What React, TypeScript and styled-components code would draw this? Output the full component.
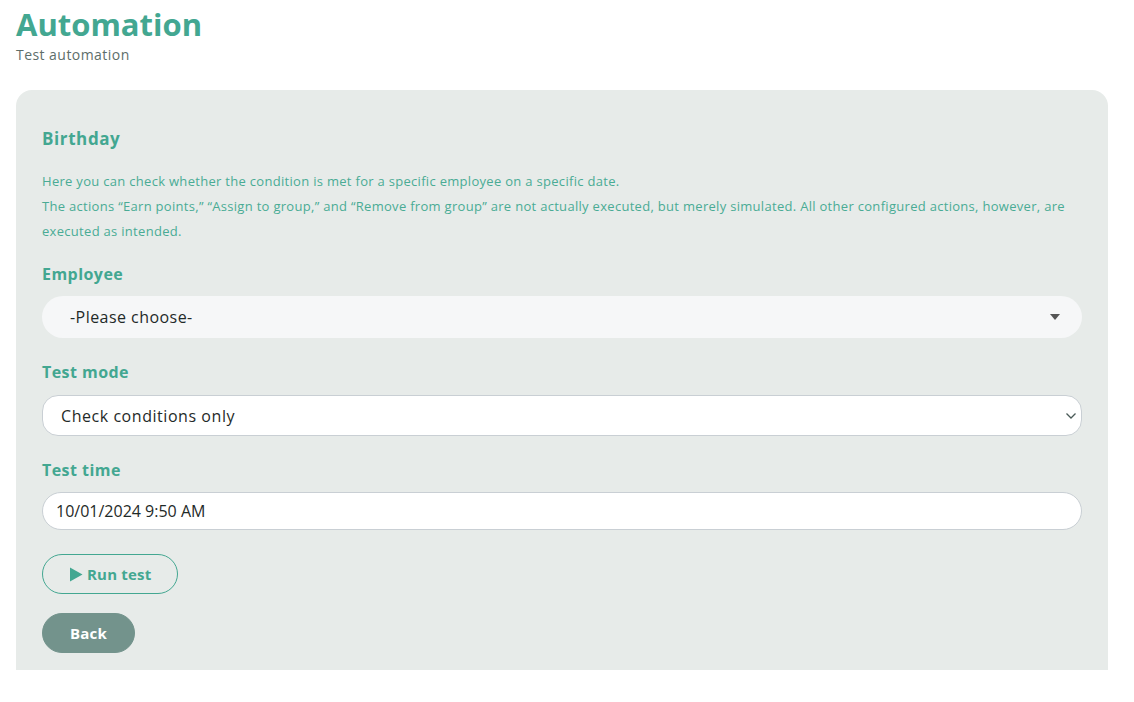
import React from 'react';
import styled, { createGlobalStyle } from 'styled-components';

const teal = '#43a791';
const tealText = '#4aab95';
const cardBg = '#e7ebe9';
const grayText = '#5d6e6a';
const darkText = '#1f2a28';

const GlobalStyle = createGlobalStyle`
  html, body {
    margin: 0;
    padding: 0;
    background: #ffffff;
    font-family: "Open Sans", "Noto Sans", Arial, sans-serif;
  }
  * { box-sizing: border-box; }
`;

const Page = styled.div`
  padding: 4px 26px 0 16px;
`;

const Title = styled.h1`
  margin: 0;
  color: ${teal};
  font-size: 31px;
  font-weight: 700;
  line-height: 40px;
`;

const Subtitle = styled.p`
  margin: 1px 0 0 0;
  color: ${grayText};
  font-size: 14px;
  letter-spacing: 0.45px;
  line-height: 20px;
`;

const Card = styled.div`
  margin-top: 25px;
  background: ${cardBg};
  border-radius: 16px 16px 0 0;
  padding: 36px 26px 17px 26px;
  display: flex;
  flex-direction: column;
`;

const Heading = styled.h2`
  margin: 0 0 17px 0;
  color: ${teal};
  font-size: 17px;
  font-weight: 700;
  letter-spacing: 0.6px;
  line-height: 26px;
`;

const Info = styled.p`
  margin: 0;
  color: ${tealText};
  font-size: 13px;
  letter-spacing: 0.3px;
  line-height: 25px;
`;

const Field = styled.div<{ $top: number; $gap: number }>`
  display: flex;
  flex-direction: column;
  gap: ${({ $gap }) => $gap}px;
  margin-top: ${({ $top }) => $top}px;
`;

const Label = styled.label`
  color: ${teal};
  font-size: 16px;
  font-weight: 700;
  letter-spacing: 0.45px;
  line-height: 22px;
`;

const SelectBox = styled.div<{ $variant: 'soft' | 'plain' }>`
  position: relative;
  display: flex;
  align-items: center;
  height: ${({ $variant }) => ($variant === 'soft' ? 42 : 41)}px;
  padding-left: ${({ $variant }) => ($variant === 'soft' ? 28 : 18)}px;
  border-radius: ${({ $variant }) => ($variant === 'soft' ? 21 : 16)}px;
  background: ${({ $variant }) => ($variant === 'soft' ? '#f6f7f8' : '#ffffff')};
  border: ${({ $variant }) => ($variant === 'soft' ? 'none' : '1px solid #c9cfd4')};
  color: ${darkText};
  font-size: 16px;
  letter-spacing: ${({ $variant }) => ($variant === 'soft' ? 0.45 : 0.55)}px;
`;

const Caret = styled.span<{ $right: number }>`
  position: absolute;
  right: ${({ $right }) => $right}px;
  top: 50%;
  transform: translateY(-50%);
  display: flex;
`;

const TextInput = styled.div`
  display: flex;
  align-items: center;
  height: 38px;
  padding-left: 13px;
  border-radius: 19px;
  background: #ffffff;
  border: 1px solid #c9cfd4;
  color: ${darkText};
  font-size: 16px;
`;

const Actions = styled.div`
  margin-top: 24px;
  display: flex;
  flex-direction: column;
  align-items: flex-start;
  gap: 19px;
`;

const Button = styled.button<{ $primary?: boolean }>`
  height: 40px;
  padding: 0 ${({ $primary }) => ($primary ? 26 : 27)}px;
  border-radius: 20px;
  font-family: inherit;
  font-size: 15px;
  font-weight: 700;
  letter-spacing: 0.2px;
  display: inline-flex;
  align-items: center;
  gap: 4px;
  cursor: pointer;
  color: ${({ $primary }) => ($primary ? teal : '#ffffff')};
  background: ${({ $primary }) => ($primary ? 'transparent' : '#73938c')};
  border: 1px solid ${({ $primary }) => ($primary ? teal : '#73938c')};
`;

export default function App() {
  return (
    <>
      <GlobalStyle />
      <Page>
        <Title>Automation</Title>
        <Subtitle>Test automation</Subtitle>
        <Card>
          <Heading>Birthday</Heading>
          <Info>Here you can check whether the condition is met for a specific employee on a specific date.</Info>
          <Info>
            The actions “Earn points,” “Assign to group,” and “Remove from group” are not actually executed, but merely
            simulated. All other configured actions, however, are executed as intended.
          </Info>

          <Field $top={19} $gap={11}>
            <Label>Employee</Label>
            <SelectBox $variant="soft">
              -Please choose-
              <Caret $right={22}>
                <svg width="10" height="6" viewBox="0 0 10 6">
                  <path d="M0 0h10L5 6z" fill="#555" />
                </svg>
              </Caret>
            </SelectBox>
          </Field>

          <Field $top={23} $gap={12}>
            <Label>Test mode</Label>
            <SelectBox $variant="plain">
              Check conditions only
              <Caret $right={4}>
                <svg width="12" height="8" viewBox="0 0 12 8">
                  <path d="M1.5 1.5 6 6l4.5-4.5" fill="none" stroke="#4a5a57" strokeWidth="1.3" />
                </svg>
              </Caret>
            </SelectBox>
          </Field>

          <Field $top={23} $gap={11}>
            <Label>Test time</Label>
            <TextInput>10/01/2024 9:50 AM</TextInput>
          </Field>

          <Actions>
            <Button $primary>
              <svg width="14" height="15" viewBox="0 0 14 15">
                <path d="M1 0.5v14l12.5-7z" fill={teal} />
              </svg>
              Run test
            </Button>
            <Button>Back</Button>
          </Actions>
        </Card>
      </Page>
    </>
  );
}
